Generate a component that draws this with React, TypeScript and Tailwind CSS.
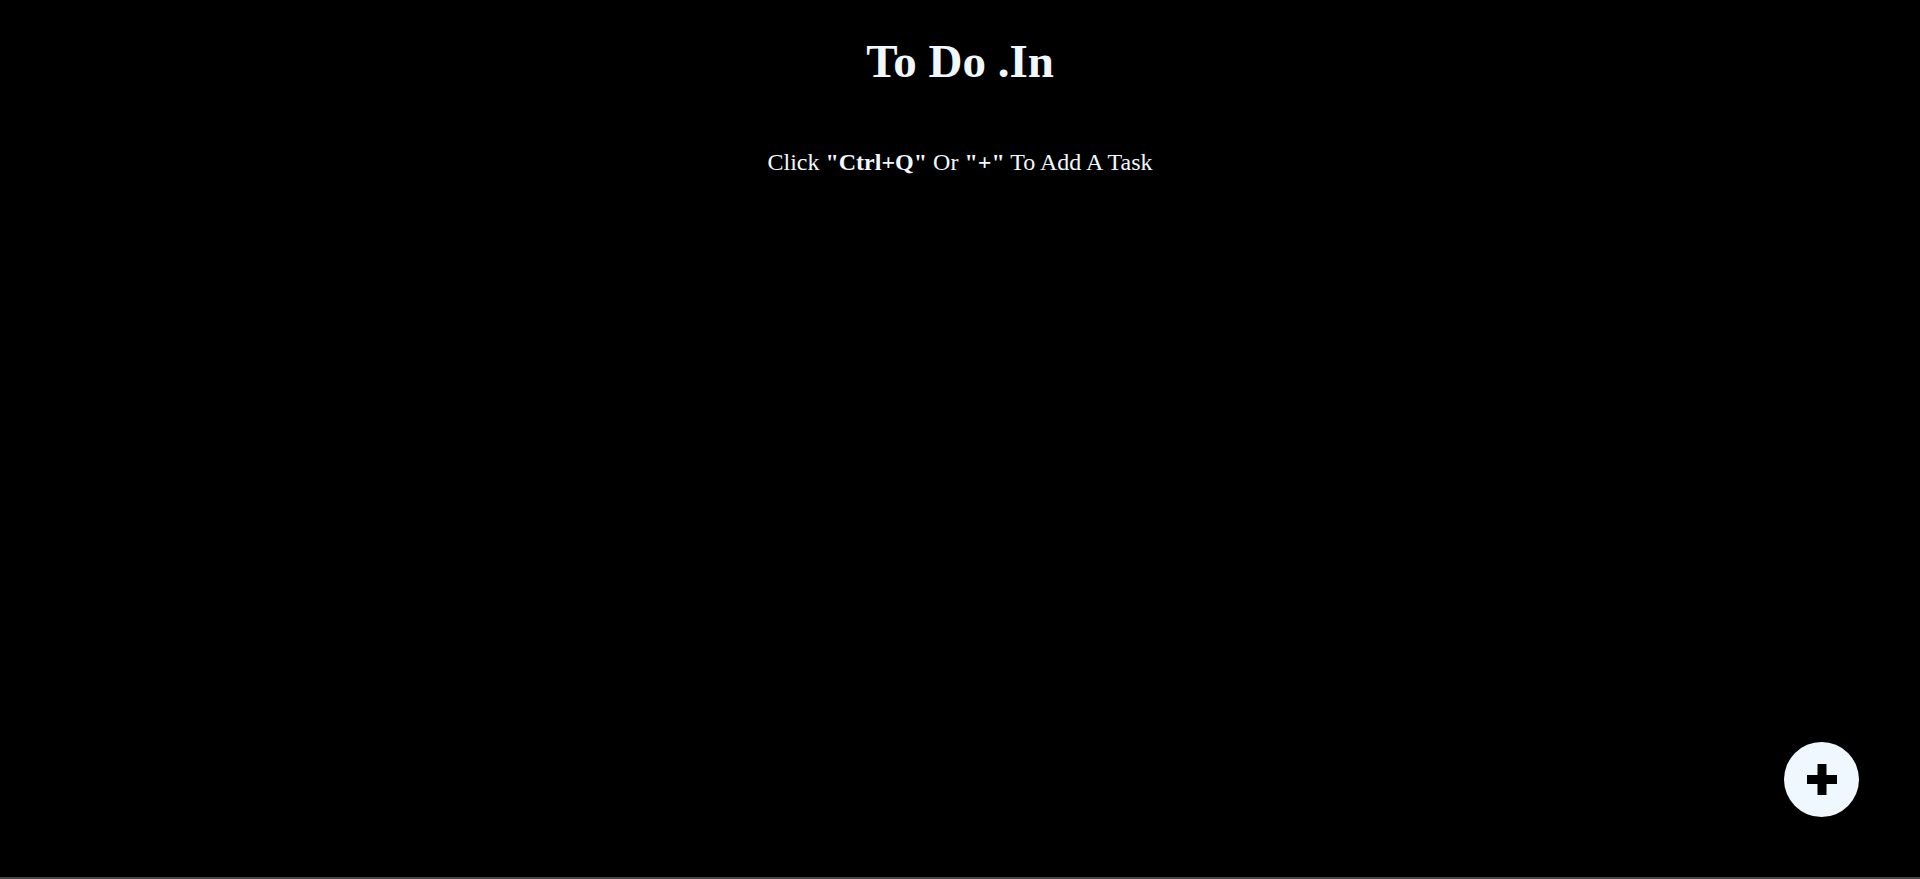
const PlusIcon = () => (
  <svg width="30" height="31" viewBox="0 0 30 31" fill="currentColor" aria-hidden="true">
    <rect x="0" y="11" width="30" height="9" />
    <rect x="10.5" y="0" width="9" height="31" />
  </svg>
);

const App = () => (
  <div className="relative h-screen bg-black border-b-2 border-[#464646] text-[#f0f8ff] font-['Liberation_Serif',serif] overflow-hidden">
    {/* Header */}
    <header className="flex flex-col items-center pt-[38px]">
      <h1 className="text-[47px] leading-[46px] font-bold">To Do .In</h1>
      <p className="mt-[66px] text-[24px] leading-[24px]">
        Click <b>"Ctrl+Q"</b> Or <b>"+"</b> To Add A Task
      </p>
    </header>

    {/* Task list lives here once tasks are added */}
    <main className="flex flex-col items-center mt-8" />

    {/* Floating add button */}
    <button
      type="button"
      aria-label="Add task"
      className="absolute right-[61px] bottom-[60px] flex h-[75px] w-[75px] items-center justify-center rounded-full bg-[#f0f8ff] text-black"
    >
      <PlusIcon />
    </button>
  </div>
);

export default App;
